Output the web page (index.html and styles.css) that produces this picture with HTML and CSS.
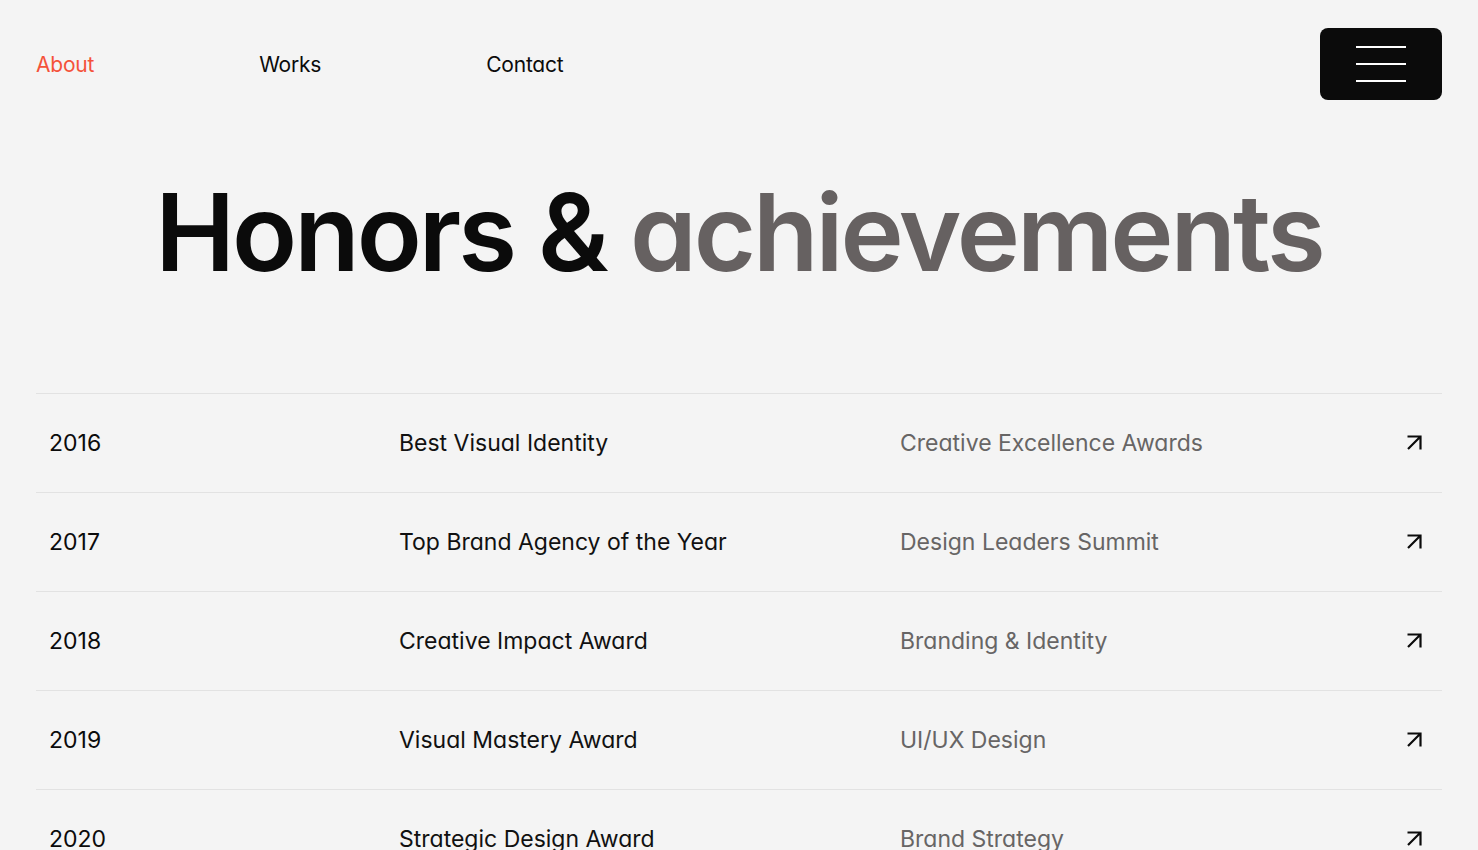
FILE: index.html
```html
<!DOCTYPE html>
<html lang="en">
<head>
    <meta charset="UTF-8">
    <meta name="viewport" content="width=device-width, initial-scale=1.0">
    <title>Honors &amp; achievements</title>
    <link rel="stylesheet" href="styles.css">
</head>
<body>

<header class="header">
    <nav class="nav">
        <a href="#" class="nav-link active">About</a>
        <a href="#" class="nav-link">Works</a>
        <a href="#" class="nav-link">Contact</a>
    </nav>
    <button class="menu-btn" aria-label="Menu">
        <span></span>
        <span></span>
        <span></span>
    </button>
</header>

<section class="hero">
    <h1>Honors &amp; <span class="muted">achievements</span></h1>
</section>

<section class="awards">
    <div class="award-row">
        <span class="year">2016</span>
        <span class="title">Best Visual Identity</span>
        <span class="org">Creative Excellence Awards</span>
        <svg class="arrow" viewBox="0 0 16 16"><path d="M2 14L14.5 1.5M1.5 1.5H14.5V14.5"/></svg>
    </div>
    <div class="award-row">
        <span class="year">2017</span>
        <span class="title">Top Brand Agency of the Year</span>
        <span class="org">Design Leaders Summit</span>
        <svg class="arrow" viewBox="0 0 16 16"><path d="M2 14L14.5 1.5M1.5 1.5H14.5V14.5"/></svg>
    </div>
    <div class="award-row">
        <span class="year">2018</span>
        <span class="title">Creative Impact Award</span>
        <span class="org">Branding &amp; Identity</span>
        <svg class="arrow" viewBox="0 0 16 16"><path d="M2 14L14.5 1.5M1.5 1.5H14.5V14.5"/></svg>
    </div>
    <div class="award-row">
        <span class="year">2019</span>
        <span class="title">Visual Mastery Award</span>
        <span class="org">UI/UX Design</span>
        <svg class="arrow" viewBox="0 0 16 16"><path d="M2 14L14.5 1.5M1.5 1.5H14.5V14.5"/></svg>
    </div>
    <div class="award-row">
        <span class="year">2020</span>
        <span class="title">Strategic Design Award</span>
        <span class="org">Brand Strategy</span>
        <svg class="arrow" viewBox="0 0 16 16"><path d="M2 14L14.5 1.5M1.5 1.5H14.5V14.5"/></svg>
    </div>
</section>

</body>
</html>
```

FILE: styles.css
```css
body {
    font-family: Inter, "Noto Sans", sans-serif;
    font-feature-settings: "cv11";
    background-color: #f4f4f4;
    color: #0b0b0b;
    margin: 0;
    padding: 0 36px;
    overflow: hidden;
}

.header {
    display: flex;
    justify-content: space-between;
    align-items: center;
    padding-top: 28px;
}

.nav {
    display: flex;
    gap: 165px;
}

.nav-link {
    font-size: 21px;
    color: #0b0b0b;
    text-decoration: none;
    letter-spacing: -0.01em;
}

.nav-link.active {
    color: #f4523a;
}

.menu-btn {
    width: 122px;
    height: 72px;
    background-color: #0b0b0b;
    border: none;
    border-radius: 8px;
    display: flex;
    flex-direction: column;
    align-items: center;
    justify-content: center;
    gap: 15px;
    padding: 0;
    cursor: pointer;
}

.menu-btn span {
    display: block;
    width: 50px;
    height: 2px;
    background-color: #fff;
}

.hero {
    padding: 68px 0 97px;
    text-align: center;
}

.hero h1 {
    margin: 0;
    font-size: 107px;
    font-weight: 600;
    letter-spacing: -0.028em;
    line-height: 1.2;
}

.muted {
    color: #666161;
}

.award-row {
    box-sizing: border-box;
    display: grid;
    grid-template-columns: 350px 501px 1fr auto;
    align-items: center;
    height: 99px;
    padding: 0 20px 0 13px;
    border-top: 1.5px solid #e2e2e2;
    font-size: 23px;
}

.title {
    color: #111;
}

.org {
    color: #676565;
}

.arrow {
    width: 16px;
    height: 16px;
    fill: none;
    stroke: #0b0b0b;
    stroke-width: 2.2;
}
```
